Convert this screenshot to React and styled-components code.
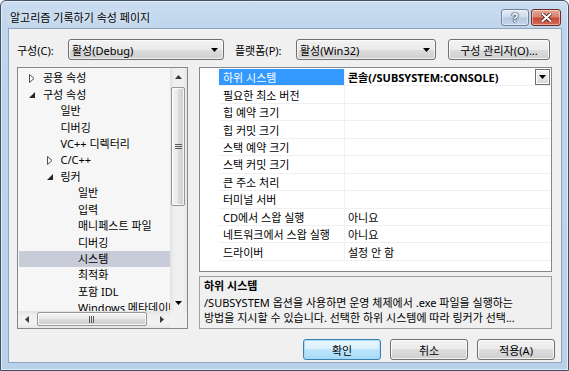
import React from "react";
import styled, { createGlobalStyle } from "styled-components";

const GlobalStyle = createGlobalStyle`
  html, body {
    margin: 0;
    padding: 0;
    background: #fff;
  }
  body {
    font-family: "Noto Sans", "Noto Sans CJK KR", sans-serif;
    font-size: 11px;
    color: #000;
  }
  * {
    box-sizing: border-box;
  }
`;

const treeItems = [
  { label: "공용 속성", level: 0, toggle: "closed" },
  { label: "구성 속성", level: 0, toggle: "open" },
  { label: "일반", level: 1 },
  { label: "디버깅", level: 1 },
  { label: "VC++ 디렉터리", level: 1 },
  { label: "C/C++", level: 1, toggle: "closed" },
  { label: "링커", level: 1, toggle: "open" },
  { label: "일반", level: 2 },
  { label: "입력", level: 2 },
  { label: "매니페스트 파일", level: 2 },
  { label: "디버깅", level: 2 },
  { label: "시스템", level: 2, selected: true },
  { label: "최적화", level: 2 },
  { label: "포함 IDL", level: 2 },
  { label: "Windows 메타데이터", level: 2 },
];

const props = [
  { name: "하위 시스템", value: "콘솔(/SUBSYSTEM:CONSOLE)", selected: true, bold: true, drop: true },
  { name: "필요한 최소 버전", value: "" },
  { name: "힙 예약 크기", value: "" },
  { name: "힙 커밋 크기", value: "" },
  { name: "스택 예약 크기", value: "" },
  { name: "스택 커밋 크기", value: "" },
  { name: "큰 주소 처리", value: "" },
  { name: "터미널 서버", value: "" },
  { name: "CD에서 스왑 실행", value: "아니요" },
  { name: "네트워크에서 스왑 실행", value: "아니요" },
  { name: "드라이버", value: "설정 안 함" },
];

const DownArrow = () => (
  <svg width="7" height="4" viewBox="0 0 7 4">
    <polygon points="0,0 7,0 3.5,4" fill="#000" />
  </svg>
);

const App = () => {
  return (
    <>
      <GlobalStyle />
      <Window>
        <TitleBar>
          <Title>알고리즘 기록하기 속성 페이지</Title>
          <CaptionButton $kind="help">?</CaptionButton>
          <CaptionButton $kind="close">
            <svg width="11" height="9" viewBox="0 0 11 9">
              <path d="M1.5 1 L9.5 8 M9.5 1 L1.5 8" stroke="#4a1d18" strokeWidth="3.6" strokeLinecap="square" />
              <path d="M1.5 1 L9.5 8 M9.5 1 L1.5 8" stroke="#fff" strokeWidth="2" strokeLinecap="square" />
            </svg>
          </CaptionButton>
        </TitleBar>

        <Client>
          <TopRow>
            <FieldLabel $width={51}>구성(C):</FieldLabel>
            <Combo $width={156}>
              <span>활성(Debug)</span>
              <DownArrow />
            </Combo>
            <FieldLabel $width={61} $gap={11}>플랫폼(P):</FieldLabel>
            <Combo $width={140}>
              <span>활성(Win32)</span>
              <DownArrow />
            </Combo>
            <PushButton $width={102} $gap={12}>구성 관리자(O)...</PushButton>
          </TopRow>

          <Body>
            <TreePanel>
              <TreeContent>
                {treeItems.map((item, i) => (
                  <TreeRow key={i} $level={item.level} $selected={item.selected}>
                    <Expander>
                      {item.toggle === "closed" && (
                        <svg width="6" height="9" viewBox="0 0 6 9">
                          <polygon points="0.5,0.5 5,4.5 0.5,8.5" fill="#fff" stroke="#4d4d4d" />
                        </svg>
                      )}
                      {item.toggle === "open" && (
                        <svg width="6" height="6" viewBox="0 0 6 6">
                          <polygon points="6,0 6,6 0,6" fill="#262626" />
                        </svg>
                      )}
                    </Expander>
                    <TreeLabel>{item.label}</TreeLabel>
                  </TreeRow>
                ))}
              </TreeContent>
              <VScroll>
                <ArrowBox $size={18}>
                  <svg width="7" height="4" viewBox="0 0 7 4">
                    <polygon points="0,4 7,4 3.5,0" fill="#3a3a3a" />
                  </svg>
                </ArrowBox>
                <Thumb $vertical $size={119} $offset={1}>
                  <svg width="7" height="6" viewBox="0 0 7 6">
                    <path d="M0 0.5 H7 M0 2.5 H7 M0 4.5 H7" stroke="#5a5a5a" strokeWidth="1" />
                  </svg>
                </Thumb>
                <Spacer />
                <ArrowBox $size={17}>
                  <DownArrow />
                </ArrowBox>
              </VScroll>
              <HScroll>
                <ArrowBox $size={17} $horizontal>
                  <svg width="4" height="7" viewBox="0 0 4 7">
                    <polygon points="4,0 4,7 0,3.5" fill="#3a3a3a" />
                  </svg>
                </ArrowBox>
                <Thumb $size={110} $offset={2}>
                  <svg width="6" height="7" viewBox="0 0 6 7">
                    <path d="M0.5 0 V7 M2.5 0 V7 M4.5 0 V7" stroke="#5a5a5a" strokeWidth="1" />
                  </svg>
                </Thumb>
                <Spacer />
                <ArrowBox $size={17} $horizontal>
                  <svg width="4" height="7" viewBox="0 0 4 7">
                    <polygon points="0,0 0,7 4,3.5" fill="#3a3a3a" />
                  </svg>
                </ArrowBox>
              </HScroll>
              <Corner />
            </TreePanel>

            <RightColumn>
              <PropGrid>
                {props.map((p, i) => (
                  <PropRow key={i}>
                    <Gutter />
                    <NameCell $selected={p.selected}>{p.name}</NameCell>
                    <ValueCell $bold={p.bold}>
                      <span>{p.value}</span>
                      {p.drop && (
                        <CellDrop>
                          <DownArrow />
                        </CellDrop>
                      )}
                    </ValueCell>
                  </PropRow>
                ))}
              </PropGrid>
              <Description>
                <DescTitle>하위 시스템</DescTitle>
                <DescLine>/SUBSYSTEM 옵션을 사용하면 운영 체제에서 .exe 파일을 실행하는</DescLine>
                <DescLine>방법을 지시할 수 있습니다. 선택한 하위 시스템에 따라 링커가 선택...</DescLine>
              </Description>
            </RightColumn>
          </Body>

          <ButtonRow>
            <PushButton $width={78} $default>확인</PushButton>
            <PushButton $width={78}>취소</PushButton>
            <PushButton $width={78}>적용(A)</PushButton>
          </ButtonRow>
        </Client>
      </Window>
    </>
  );
};

const Window = styled.div`
  width: 569px;
  height: 371px;
  border: 1px solid #3f5166;
  border-radius: 6px 6px 0 0;
  background: linear-gradient(to bottom, #cadcf0 0%, #bfd5ec 28px, #bad1ea 100%);
  box-shadow: inset 0 0 0 1px rgba(255, 255, 255, 0.55);
  display: flex;
  flex-direction: column;
`;

const TitleBar = styled.div`
  height: 27px;
  display: flex;
  align-items: flex-start;
  padding: 0 7px 0 9px;
`;

const Title = styled.div`
  flex: 1;
  margin-top: 9px;
  line-height: 15px;
  color: #000;
  text-shadow: 0 0 6px rgba(255, 255, 255, 0.9);
`;

const CaptionButton = styled.div`
  margin-top: 8px;
  height: 17px;
  width: ${({ $kind }) => ($kind === "close" ? "30px" : "28px")};
  margin-right: ${({ $kind }) => ($kind === "help" ? "2px" : "0")};
  border: 1px solid ${({ $kind }) => ($kind === "close" ? "#6e2b22" : "#6f8299")};
  border-radius: 3px;
  display: flex;
  align-items: center;
  justify-content: center;
  color: #fff;
  font-family: "Liberation Sans", sans-serif;
  font-weight: bold;
  font-size: 12px;
  text-shadow: 0 0 1px #233548, 0 0 1px #233548, 0 0 2px #233548;
  box-shadow: inset 0 0 0 1px rgba(255, 255, 255, 0.45);
  background: ${({ $kind }) =>
    $kind === "close"
      ? "linear-gradient(to bottom, #e6a99a 0%, #d9826f 45%, #c7493a 55%, #d36b55 100%)"
      : "linear-gradient(to bottom, #e3ecf7 0%, #ccdbec 45%, #b4c8df 55%, #c4d6ea 100%)"};
`;

const Client = styled.div`
  flex: 1;
  margin: 0 6px 7px 7px;
  background: #f0f0f0;
  border: 1px solid #8fa5bf;
  padding: 10px 9px 2px 8px;
  display: flex;
  flex-direction: column;
`;

const TopRow = styled.div`
  height: 21px;
  display: flex;
  align-items: center;
`;

const FieldLabel = styled.div`
  width: ${({ $width }) => $width}px;
  margin-left: ${({ $gap }) => $gap || 0}px;
  white-space: nowrap;
`;

const Combo = styled.div`
  width: ${({ $width }) => $width}px;
  height: 21px;
  border: 1px solid #707070;
  border-radius: 3px;
  display: flex;
  align-items: center;
  justify-content: space-between;
  padding: 0 5px 0 3px;
  background: linear-gradient(to bottom, #f2f2f2 0%, #ebebeb 50%, #dddddd 50%, #cfcfcf 100%);
  box-shadow: inset 0 0 0 1px rgba(255, 255, 255, 0.7);
  white-space: nowrap;
`;

const PushButton = styled.div`
  width: ${({ $width }) => $width}px;
  margin-left: ${({ $gap }) => $gap || 0}px;
  height: 21px;
  border: 1px solid ${({ $default }) => ($default ? "#3c7fb1" : "#707070")};
  border-radius: 3px;
  display: flex;
  align-items: center;
  justify-content: center;
  white-space: nowrap;
  background: ${({ $default }) =>
    $default
      ? "linear-gradient(to bottom, #eaf6fd 0%, #d9f0fc 50%, #bee6fd 50%, #a7d9f5 100%)"
      : "linear-gradient(to bottom, #f2f2f2 0%, #ebebeb 50%, #dddddd 50%, #cfcfcf 100%)"};
  box-shadow: inset 0 0 0 1px
    ${({ $default }) => ($default ? "rgba(160, 220, 250, 0.9)" : "rgba(255, 255, 255, 0.75)")};
`;

const Body = styled.div`
  margin-top: 7px;
  height: 262px;
  display: flex;
  gap: 11px;
`;

const TreePanel = styled.div`
  width: 171px;
  border: 1px solid #828790;
  background: #f6f6f6;
  display: grid;
  grid-template-columns: 1fr 17px;
  grid-template-rows: 1fr 17px;
  overflow: hidden;
`;

const TreeContent = styled.div`
  overflow: hidden;
  padding-top: 2px;
`;

const TreeRow = styled.div`
  height: 16.45px;
  display: flex;
  align-items: center;
  padding-left: ${({ $level }) => 10 + $level * 17.5}px;
  background: ${({ $selected }) => ($selected ? "#c8cbd8" : "transparent")};
  margin-left: 1px;
`;

const Expander = styled.div`
  width: 14px;
  flex: none;
  display: flex;
  align-items: center;
`;

const TreeLabel = styled.span`
  white-space: nowrap;
  line-height: 16px;
`;

const VScroll = styled.div`
  display: flex;
  flex-direction: column;
  background: linear-gradient(to right, #e2e2e2 0%, #efefef 25%, #f1f1f1 75%, #e6e6e6 100%);
`;

const HScroll = styled.div`
  display: flex;
  background: linear-gradient(to bottom, #e2e2e2 0%, #efefef 25%, #f1f1f1 75%, #e6e6e6 100%);
`;

const Corner = styled.div`
  background: #f0f0f0;
`;

const ArrowBox = styled.div`
  flex: none;
  ${({ $horizontal, $size }) => ($horizontal ? `width: ${$size}px;` : `height: ${$size}px;`)}
  display: flex;
  align-items: center;
  justify-content: center;
`;

const Thumb = styled.div`
  flex: none;
  border: 1px solid #979797;
  border-radius: 2px;
  display: flex;
  align-items: center;
  justify-content: center;
  box-shadow: inset 0 0 0 1px rgba(255, 255, 255, 0.8);
  ${({ $vertical, $size, $offset }) =>
    $vertical
      ? `height: ${$size}px; margin: ${$offset}px 2px 0 1px;
         background: linear-gradient(to right, #f4f4f4 0%, #eaeaea 45%, #dadada 55%, #cfcfcf 100%);`
      : `width: ${$size}px; margin: 1px 0 2px ${$offset}px;
         background: linear-gradient(to bottom, #f4f4f4 0%, #eaeaea 45%, #dadada 55%, #cfcfcf 100%);`}
`;

const Spacer = styled.div`
  flex: 1;
`;

const RightColumn = styled.div`
  flex: 1;
  display: flex;
  flex-direction: column;
  gap: 4px;
`;

const PropGrid = styled.div`
  height: 205px;
  border: 1px solid #828790;
  background: #fff;
  padding-top: 1px;
`;

const PropRow = styled.div`
  height: 17.45px;
  display: grid;
  grid-template-columns: 19px 126px 1fr;
`;

const Gutter = styled.div``;

const NameCell = styled.div`
  display: flex;
  align-items: center;
  padding-left: 4px;
  white-space: nowrap;
  overflow: hidden;
  border-bottom: 1px solid #f0f0f3;
  border-right: 1px solid #f0f0f3;
  background: ${({ $selected }) => ($selected ? "#3399ff" : "transparent")};
  color: ${({ $selected }) => ($selected ? "#fff" : "#000")};
`;

const ValueCell = styled.div`
  display: flex;
  align-items: center;
  padding-left: 3px;
  padding-right: 1px;
  white-space: nowrap;
  overflow: hidden;
  border-bottom: 1px solid #f0f0f3;
  font-weight: ${({ $bold }) => ($bold ? 700 : 400)};
`;

const CellDrop = styled.div`
  margin-left: auto;
  width: 15px;
  height: 16px;
  border: 1px solid #707070;
  display: flex;
  align-items: center;
  justify-content: center;
  background: linear-gradient(to bottom, #f4f4f4 0%, #e6e6e6 50%, #d8d8d8 100%);
  box-shadow: inset 0 0 0 1px #fff;
`;

const Description = styled.div`
  height: 53px;
  border: 1px solid #a0a0a0;
  background: #f0f0f0;
  padding: 1px 5px 0 4px;
  overflow: hidden;
`;

const DescTitle = styled.div`
  font-weight: 700;
  line-height: 15px;
  margin-bottom: 2px;
`;

const DescLine = styled.div`
  line-height: 15px;
  white-space: nowrap;
  overflow: hidden;
  text-overflow: ellipsis;
`;

const ButtonRow = styled.div`
  margin-top: 10px;
  margin-right: -3px;
  display: flex;
  justify-content: flex-end;
  gap: 9px;
`;

export default App;
